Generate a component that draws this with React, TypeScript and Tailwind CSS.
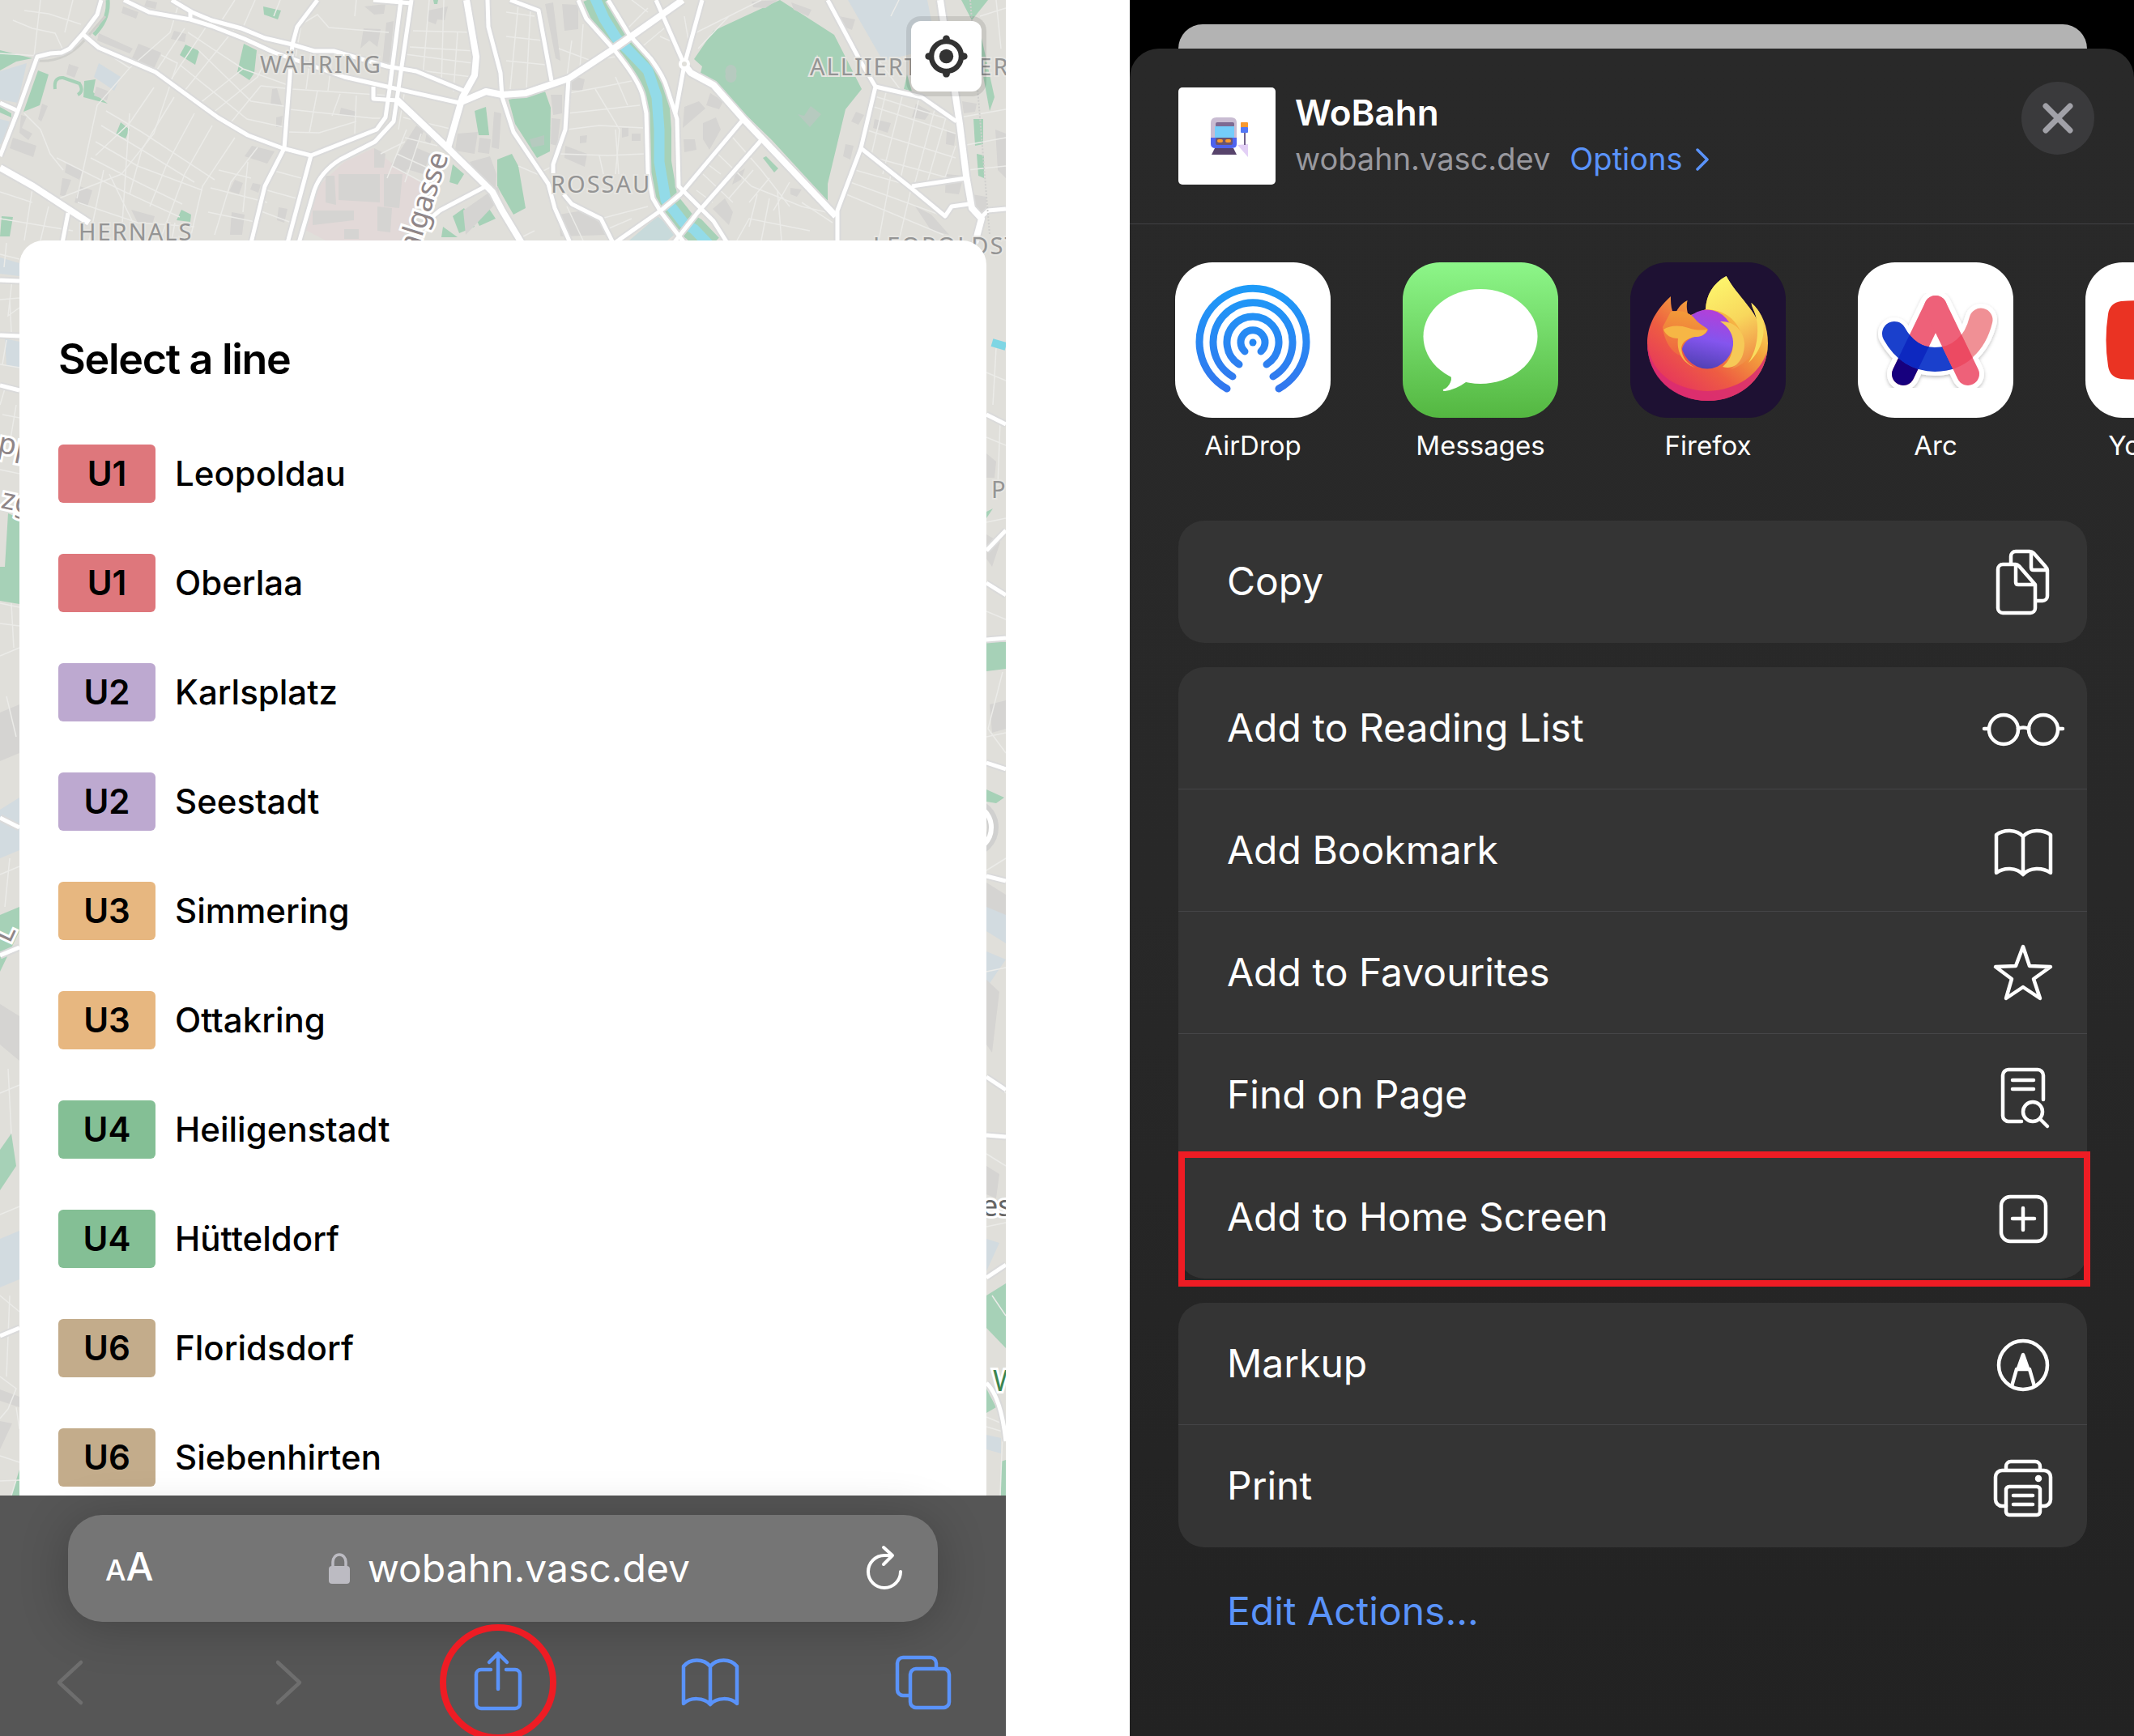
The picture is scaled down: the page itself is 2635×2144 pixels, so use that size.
import type { ReactNode } from 'react'

type Line = { code: string; badge: string; name: string }

const LINES: Line[] = [
  { code: 'U1', badge: 'bg-[#de777c]', name: 'Leopoldau' },
  { code: 'U1', badge: 'bg-[#de777c]', name: 'Oberlaa' },
  { code: 'U2', badge: 'bg-[#bda9d0]', name: 'Karlsplatz' },
  { code: 'U2', badge: 'bg-[#bda9d0]', name: 'Seestadt' },
  { code: 'U3', badge: 'bg-[#e7b780]', name: 'Simmering' },
  { code: 'U3', badge: 'bg-[#e7b780]', name: 'Ottakring' },
  { code: 'U4', badge: 'bg-[#84bf95]', name: 'Heiligenstadt' },
  { code: 'U4', badge: 'bg-[#84bf95]', name: 'Hütteldorf' },
  { code: 'U6', badge: 'bg-[#c3ac8b]', name: 'Floridsdorf' },
  { code: 'U6', badge: 'bg-[#c3ac8b]', name: 'Siebenhirten' },
]

const PARKS = [
  '963,0 1030,43 1064,110 1044,135 1022,227 1022,248 953,173 881,103 865,90 867,82 857,73 881,38',
  '628,123 673,113 680,133 679,187 663,195 636,153',
  '614,197 632,190 640,205 649,257 634,265 614,230',
  '0,62 40,72 20,76 0,87',
  '47,87 60,92 49,130 29,138',
  '229,55 246,63 241,80 222,68',
  '301,54 317,62 314,90 308,99 293,89',
  '149,151 160,160 155,171 143,166',
  '224,259 236,265 235,274 218,272',
  '2,267 16,268 12,292 0,292',
  '104,100 118,98 115,114 133,128 103,120',
  '586,137 600,132 604,167 591,167',
  '559,203 573,215 565,228 555,225',
  '559,267 573,257 586,280 567,288',
  '586,267 604,258 612,270 592,279',
  '547,280 565,293 545,293',
  '1212,47 1228,120 1222,137 1212,83',
  '1202,147 1214,147 1214,178 1204,180',
  '1206,190 1215,192 1215,220 1208,217',
  '1187,0 1220,0 1200,25',
  '1120,92 1126,113 1116,110',
  '942,195 946,193 961,208 956,213',
  '325,8 347,13 343,24 326,18',
  '535,0 541,0 540,5 536,5',
  '0,132 14,140 14,145 0,139',
  '10,634 24,640 24,746 0,742 0,700 6,700',
  '0,1130 24,1120 24,1150 0,1200',
  '14,1847 24,1815 24,1847',
  '0,1420 14,1400 20,1440 0,1470',
  '1218,793 1242,793 1242,826 1218,829',
  '1218,632 1226,628 1218,640',
  '1218,975 1240,985 1230,992 1218,990',
  '1218,1600 1242,1585 1242,1665 1218,1640',
  '1218,1715 1230,1738 1218,1745',
  '1236,1805 1242,1803 1242,1847 1236,1847',
]

const BUILDINGS = [
  '171,54 199,65 190,85 163,72',
  '215,38 230,42 228,52 211,48',
  '152,8 171,15 168,23 150,16',
  '181,0 194,3 192,11 178,8',
  '418,215 469,215 469,250 418,247',
  '402,217 413,217 415,253 402,250',
  '474,215 497,215 493,257 474,255',
  '386,260 437,260 437,272 386,278',
  '425,283 443,283 443,295 425,295',
  '462,183 476,190 474,207 462,207',
  '466,255 484,257 482,287 466,285',
  '514,155 524,160 500,215 483,203',
  '508,180 532,190 522,215 500,208',
  '528,158 537,160 531,178 525,174',
  '528,13 553,8 549,25 540,24 538,30 528,26',
  '450,8 476,5 474,17 462,18',
  '449,35 470,36 466,58 456,50 445,60',
  '477,28 486,26 481,82 472,78',
  '421,133 440,138 437,145 419,142',
  '336,110 342,109 348,130 334,129',
  '341,145 349,143 347,157 341,157',
  '290,222 300,226 295,240 283,236',
  '312,226 322,228 319,238 309,234',
  '311,180 339,187 330,202 302,193',
  '286,262 302,265 299,290 284,290',
  '344,256 355,258 351,275 342,272',
  '162,259 191,267 188,277 170,275',
  '82,202 102,210 98,222 80,213',
  '77,220 88,222 80,243 74,241',
  '98,230 114,235 108,255 92,250',
  '16,170 45,180 41,194 12,183',
  '52,128 59,131 51,150 47,147',
  '26,142 33,144 27,158 40,165 35,173 24,164',
  '85,79 97,83 92,96 82,92',
  '119,107 135,113 132,124 116,118',
  '122,41 164,60 160,66 120,50',
  '565,165 590,163 586,190 562,186',
  '592,170 606,172 604,190 590,188',
  '610,138 619,140 616,184 607,182',
  '580,200 605,193 613,215 612,234 595,225',
  '572,260 615,230 618,245 575,290',
  '673,5 683,3 692,75 686,72',
  '694,5 714,6 714,36 697,38',
  '706,93 722,98 719,112 706,111',
  '680,117 694,117 694,140 683,142',
  '681,146 692,147 688,180 680,178',
  '716,168 725,167 724,176 716,177',
  '698,180 725,190 722,206 697,195',
  '768,158 776,158 776,168 768,170',
  '780,165 791,165 791,174 780,174',
  '845,132 863,125 871,134 843,158',
  '868,152 884,145 890,160 876,185 868,172',
  '844,172 858,172 860,185 845,188',
  '877,115 893,125 888,135 872,130',
  '690,265 720,260 740,275 750,290 692,292',
  '895,245 905,262 900,278 880,258',
  '908,215 920,208 915,222 904,228',
  '976,232 990,234 984,243 976,240',
  '928,2 960,0 945,10 930,9',
  '977,3 1002,12 998,20 980,12',
  '1036,20 1056,24 1052,37 1042,33',
  '1057,138 1067,142 1060,154 1051,150',
  '1080,147 1100,152 1096,164 1078,158',
  '1131,128 1149,138 1142,148 1126,145',
  '1044,178 1054,180 1050,197 1041,193',
  '1169,160 1180,165 1178,180 1168,178',
  '1168,215 1190,217 1184,240 1167,238',
  '1188,125 1206,128 1204,138 1190,140',
  '1229,160 1242,165 1242,220 1232,210',
  '1130,255 1150,265 1172,290 1150,285',
  '1200,240 1218,243 1218,265 1204,262',
  '0,880 24,870 24,930 0,940',
  '0,1240 24,1255 24,1310 0,1290',
  '0,1716 24,1725 24,1738 0,1730',
  '0,1755 15,1758 0,1790',
  '1218,560 1230,570 1228,590 1218,590',
  '1218,660 1235,670 1225,700 1218,690',
  '1222,870 1242,865 1242,900 1225,905',
  '1218,1090 1242,1105 1242,1130 1218,1120',
  '1218,1210 1234,1225 1225,1300 1218,1290',
  '1218,1440 1234,1450 1230,1480 1218,1475',
]

const WATERY = [
  '1047,0 1145,0 1151,30 1151,60 1120,68 1090,75',
  '0,88 33,78 22,127 0,123',
  '0,147 12,150 5,180 0,178',
  '122,78 149,95 141,112 116,95',
  '0,318 24,325 24,341 0,338',
  '6,418 24,422 24,455 8,452',
  '0,1000 24,985 24,1050 0,1060',
  '0,1530 24,1520 24,1580 0,1590',
  '1218,1120 1242,1118 1242,1165 1218,1150',
  '1218,1175 1242,1185 1218,1220',
  '1218,1530 1234,1535 1218,1570',
  '1218,1772 1236,1776 1236,1795 1218,1790',
]

const MINOR_ROADS = [
  'M16 25L40 35L68 41L78 62M0 66L48 69M30 13L60 17L100 30M50 0L42 70M90 0L80 40',
  'M122 59L160 84L120 130L95 245M160 84L210 40L222 0M199 68L219 78L190 165L150 215L60 250',
  'M131 137L175 163L265 222M125 155L180 188L240 225M118 175L170 205L250 235M112 195L170 225L225 252M70 195L150 235L222 268',
  'M190 108L160 152L118 192M215 120L175 185L160 240M240 140L205 205L185 255M262 155L228 215L200 290M290 170L250 230L236 290M318 182L285 225L265 290',
  'M192 89L228 35M210 100L260 25M228 112L270 60L290 35M246 128L300 85M262 140L318 95L330 70M282 155L322 106',
  'M232 40L300 85L361 107M245 62L310 125L357 132M222 80L305 147L355 158M322 106L361 110L480 118M357 135L460 146L478 146',
  'M392 112L382 164M420 116L410 143M440 118L438 165M356 163L394 164L440 150M384 64L378 110M410 70L405 112M430 73L428 96',
  'M365 70L372 30L392 18L406 34L480 40M315 0L300 34M290 0L272 28M346 0L338 20M440 0L438 20M510 38L588 40M506 58L586 63',
  'M502 85L583 95M500 67L584 78M530 0L522 95M548 0L545 105M565 40L560 113M498 145L560 160M500 170L540 180M500 110L492 160',
  'M484 205L540 235M490 190L545 215M502 160L478 220M520 165L500 225M470 190L500 175M335 210L372 220M330 235L366 245M320 260L360 275',
  'M0 237L40 250M0 270L90 285M40 233L30 297M60 255L50 297M96 250L170 275L240 280M128 210L110 297M30 140L50 160L62 190L78 210',
  'M160 140L150 290M135 215L175 297M216 275L212 297M260 232L330 250M257 262L320 275M306 200L300 262M270 210L310 220',
  'M625 15L660 20M625 45L670 50M625 75L674 80M640 5L630 110M655 10L650 110M690 60L730 75L760 70M706 50L700 95M720 30L716 85',
  'M702 115L740 108L780 100M700 140L790 130M700 160L740 155L795 158M690 190L750 192L796 190M735 110L765 160M760 95L775 130M760 160L764 215M740 192L745 215',
  'M683 205L663 215L640 205M765 160L760 215M630 300L660 285M700 255L720 297M742 270L800 255M745 285L780 270',
  'M765 45L800 10M790 60L820 35M800 15L780 0M815 45L838 55L845 80M850 50L845 20M860 40L940 0M862 60L900 20',
  'M884 188L928 230L990 255L1020 262M868 215L905 250M905 170L940 210L975 255M860 235L880 250M870 200L890 215M925 280L935 240M940 297L950 245',
  'M990 250L1028 275M960 235L965 297M910 297L925 270L1000 285M930 210L900 245M950 220L925 250M975 225L955 260',
  'M1068 160L1180 195M1063 190L1190 225M1056 210L1126 230M1050 225L1160 265M1045 240L1165 290M1073 130L1180 165M1077 118L1180 150',
  'M1095 110L1075 195M1115 115L1090 215M1135 120L1112 220M1155 132L1128 232M1168 145L1145 225M1180 180L1165 225M1100 215L1085 297M1125 233L1110 297',
  'M1085 75L1115 115M1110 0L1100 20M1210 20L1242 10M1185 145L1242 135M1188 180L1242 170M1194 210L1242 205M1230 0L1236 60',
  'M0 314L24 320M8 300L5 330M15 345L10 390L24 380M0 370L24 368M12 368L14 410M0 450L24 454M8 420L3 450M6 480L0 500M20 500L10 560M3 512L24 516',
  'M0 580L24 585M0 770L24 773M14 745L17 800M0 745L24 750M0 810L24 800M8 860L20 910M0 1080L24 1070M12 1060L6 1120M0 1350L24 1340M10 1320L14 1400M0 1500L24 1490M0 1600L24 1620M12 1600L8 1700M0 1700L20 1715L10 1740L0 1752M20 1738L24 1765M0 1798L24 1806M0 1829L24 1828M20 1828L14 1847',
  'M1218 460L1242 470M1230 430L1226 500M1218 540L1242 550M1235 520L1232 600M1218 645L1242 640M1218 755L1242 765M1238 830L1220 900L1242 930M1218 910L1242 905M1218 1075L1242 1060M1218 1200L1242 1195M1218 1330L1242 1350M1218 1425L1242 1440M1218 1515L1242 1510M1225 1600L1242 1625M1218 1762L1238 1768L1235 1847M1218 1750L1242 1760',
]

const MAJOR_ROADS = [
  'M125 0L120 18L102 42L86 60L76 65L62 66L46 70L22 137L0 193',
  'M102 42L122 59L192 89L269 145L306 167L349 183L384 192L465 160L476 145L481 110L495 0',
  'M508 0L490 123L486 150L463 175L420 197Q396 212 388 235L369 300',
  'M153 0L184 15L235 24L261 32L302 48L339 65L425 95L478 107L567 127',
  'M212 0L237 15L261 25L298 35L327 47L361 55L388 63L412 63L478 82L514 88L575 113',
  'M235 15L235 24',
  'M392 0L367 33L361 55L351 183L327 230L310 300',
  'M384 192L355 300',
  'M84 263L77 300',
  'M602 0L603 33L618 90L620 120L634 163L677 227L685 257L704 300',
  'M600 230L543 260L496 300',
  'M0 127L20 136',
  'M461 0L508 4',
  'M461 107L461 122L490 124',
  'M630 0L665 13L681 100',
  'M702 97L698 160L683 203L683 214',
  'M714 0L724 23L757 60Q790 100 794 120L798 140L800 213L806 245L816 262L845 300',
  'M751 0L777 43L804 73Q820 95 824 110L836 147L838 230L881 273L898 300',
  'M810 0L845 80M867 0L845 80L834 140',
  'M918 147L840 240L816 260L759 300',
  'M940 173L861 263L832 300',
  'M1022 0L1061 73L1081 107L1063 183L1034 260L1034 300',
  'M1081 107L1138 120L1181 150',
  'M1063 183L1126 233L1167 267L1175 255L1196 252M1126 230L1193 220',
  'M696 240L706 252L742 270L757 300',
  'M1212 268L1220 260L1242 258',
  'M0 346L24 347M0 414L24 415M0 476L24 482',
  'M0 1010L24 1022M0 1180L24 1170M0 1650L24 1640',
  'M1218 512L1242 524M1218 680L1242 655M1218 720L1242 735M1218 790L1242 788M1218 942L1242 950',
  'M1218 1082L1242 1088M1218 1330L1242 1346M1218 1402L1242 1404M1218 1578L1242 1562M1218 1708Q1236 1725 1242 1780',
]

const MAIN_ROADS = [
  'M0 207L41 230L110 275',
  'M576 0L588 70L586 93L571 120L553 183',
  'M490 123L553 183L608 237L620 260L644 300',
  'M567 127L600 113L620 117L649 115L702 97L755 62L843 0',
  'M845 80L853 90L881 105L918 147L1032 267',
  'M1161 0L1165 27L1179 113L1185 153L1193 217L1200 257L1212 270L1204 300',
]

const RIVER = 'M734 -4L746 23L761 47L776 62L800 87L811 120L814 160L814 200L822 247L834 262L844 275L857 283L877 304'

function CityMap() {
  return (
    <svg
      className="absolute inset-0 h-full w-full"
      viewBox="0 0 1242 1847"
      preserveAspectRatio="xMinYMin slice"
      aria-hidden="true"
    >
      <rect width="1242" height="1847" fill="#e0dfda" />
      <polygon points="461,183 494,210 527,230 506,277 494,300 408,300 375,283 390,233 425,200" fill="#e2d9d8" />
      {WATERY.map(p => (
        <polygon key={p} points={p} fill="#d2dbe0" />
      ))}
      <polygon points="777,297 812,267 836,287 824,297" fill="#c8dadb" />
      {PARKS.map(p => (
        <polygon key={p} points={p} fill="#a6d1b7" />
      ))}
      {BUILDINGS.map(p => (
        <polygon key={p} points={p} fill="#d5d4d2" />
      ))}
      <g fill="#b6cabf">
        <path d="M896 91a7 8 0 1 1 13 0a7 8 0 1 1 -13 0" />
        <path d="M985 141l8 2l8 -12l13 10l-14 16z" />
        <path d="M654 172l18 -5v12l-15 3z" />
      </g>
      <path d="M133 0Q135 24 116 43" fill="none" stroke="#a6d1b7" strokeWidth="5" />
      <path d="M68 110q-2 -15 10 -14l20 7q6 10 -2 14" fill="none" stroke="#a6d1b7" strokeWidth="4" />
      <path d="M45 75Q80 78 104 50L130 20" fill="none" stroke="#cfcfcb" strokeWidth="3" />
      <g fill="none" stroke="#ebebe8" strokeWidth="1.5">
        {MINOR_ROADS.map(d => (
          <path key={d} d={d} />
        ))}
      </g>
      <g fill="none" strokeLinejoin="round">
        <path d={RIVER} stroke="#a6d1b7" strokeWidth="30" />
        <path d={RIVER} stroke="#93dbe8" strokeWidth="13" />
        <path d="M1225 423L1242 428" stroke="#7fd6e4" strokeWidth="10" />
        <g stroke="#dadada" strokeWidth="9">
          {MAJOR_ROADS.map(d => (
            <path key={d} d={d} />
          ))}
        </g>
        <g stroke="#dadada" strokeWidth="12">
          {MAIN_ROADS.map(d => (
            <path key={d} d={d} />
          ))}
        </g>
        <g stroke="#fff" strokeWidth="5">
          {MAJOR_ROADS.map(d => (
            <path key={d} d={d} />
          ))}
        </g>
        <g stroke="#fff" strokeWidth="8">
          {MAIN_ROADS.map(d => (
            <path key={d} d={d} />
          ))}
        </g>
        <circle cx="845" cy="79" r="5" fill="#e0dfda" stroke="#fff" strokeWidth="4" />
        <circle cx="1196" cy="1022" r="30" stroke="#d0d0cf" strokeWidth="14" />
        <circle cx="1194" cy="1022" r="30" stroke="#fff" strokeWidth="6" />
        <path d="M1198 0L1222 290" stroke="#cfcfcd" strokeWidth="2" strokeDasharray="2 2" />
      </g>
      <g
        className="font-['Noto_Sans',sans-serif]"
        fontSize="29"
        letterSpacing="2"
        fill="#949494"
        stroke="#e6e5e1"
        strokeWidth="4"
        paintOrder="stroke"
      >
        <text x="321" y="90">WÄHRING</text>
        <text x="97" y="297">HERNALS</text>
        <text x="680" y="238">ROSSAU</text>
        <text x="1000" y="93">ALLIIERTENVIERTEL</text>
        <text x="1078" y="314">LEOPOLDSTADT</text>
        <text x="1224" y="615">PRATER</text>
      </g>
      <g
        className="font-['Noto_Sans',sans-serif]"
        fontSize="36"
        fill="#8f8688"
        stroke="#fff"
        strokeWidth="6"
        paintOrder="stroke"
      >
        <text transform="translate(495 374) rotate(-72)">Spitalgasse</text>
        <text transform="translate(-4 558) rotate(12)">pp</text>
        <text transform="translate(0 627) rotate(12)">zg</text>
        <text transform="translate(12 1166) rotate(-65)">L</text>
        <text x="1212" y="1502" fill="#666">es</text>
        <text x="1226" y="1718" fill="#3c8550">W</text>
      </g>
    </svg>
  )
}

function NavIcon({ children }: { children: ReactNode }) {
  return (
    <svg
      className="h-20 w-20"
      viewBox="0 0 80 80"
      fill="none"
      stroke="currentColor"
      strokeWidth="4.5"
      strokeLinecap="round"
      strokeLinejoin="round"
      aria-hidden="true"
    >
      {children}
    </svg>
  )
}

function BrowserBar() {
  return (
    <footer className="relative bg-[#565656] pt-6 pb-[26px]">
      <div className="mr-[84px] ml-[84px] flex h-[132px] items-center justify-between rounded-[42px] bg-[#757575] pr-[42px] pl-[46px] text-white shadow-[0_6px_60px_rgba(0,0,0,0.22)]">
        <button type="button" aria-label="Page settings" className="flex items-baseline font-medium">
          <span className="text-[36px] leading-[64px]">A</span>
          <span className="text-[48px] leading-[64px]">A</span>
        </button>
        <button type="button" className="flex items-center gap-[22px] text-[48px] leading-[64px]">
          <svg className="h-[38px] w-[26px]" viewBox="0 0 26 38" aria-hidden="true">
            <rect y="16" width="26" height="22" rx="4" fill="#bcbbc2" />
            <path d="M5 18V11a8 9 0 0 1 16 0v7" fill="none" stroke="#bcbbc2" strokeWidth="3.5" />
          </svg>
          wobahn.vasc.dev
        </button>
        <button type="button" aria-label="Reload">
          <svg
            className="h-[58px] w-12"
            viewBox="0 0 48 58"
            fill="none"
            stroke="currentColor"
            strokeWidth="4"
            strokeLinecap="round"
            strokeLinejoin="round"
            aria-hidden="true"
          >
            <path d="M44 33a20 20 0 1 1-20-20h9M23 3l11 10-11 11" />
          </svg>
        </button>
      </div>
      <nav className="mt-[35px] flex items-center justify-between pr-[62px] pl-[46px] text-[#5a93fa]">
        <button type="button" aria-label="Back" className="text-[#6e6e6e]">
          <NavIcon>
            <path d="M54 15L27 40L54 65" />
          </NavIcon>
        </button>
        <button type="button" aria-label="Forward" className="text-[#6e6e6e]">
          <NavIcon>
            <path d="M33 15L60 40L33 65" />
          </NavIcon>
        </button>
        <button type="button" aria-label="Share" className="relative">
          <NavIcon>
            <path d="M33 24H21a6 6 0 0 0-6 6v36a6 6 0 0 0 6 6h42a6 6 0 0 0 6-6V30a6 6 0 0 0-6-6H52M42 48V5M31 15L42 4L53 15" />
          </NavIcon>
          <span className="absolute -top-8 -right-[34px] -bottom-8 -left-[30px] rounded-full border-8 border-[#ee1c24]" />
        </button>
        <button type="button" aria-label="Bookmarks">
          <NavIcon>
            <path d="M40 20C32 10 15 10 7 20V66C15 58 32 58 40 67V20C48 10 65 10 73 20V66C65 58 48 58 40 67" />
          </NavIcon>
        </button>
        <button type="button" aria-label="Tabs">
          <NavIcon>
            <path d="M22 56H15a7 7 0 0 1-7-7V16a7 7 0 0 1 7-7H49a7 7 0 0 1 7 7v7" />
            <rect x="24" y="23" width="48" height="48" rx="7" />
          </NavIcon>
        </button>
      </nav>
    </footer>
  )
}

function BrowserPhone() {
  return (
    <section className="flex min-w-0 flex-col overflow-hidden">
      <div className="relative flex flex-1 flex-col overflow-hidden px-6 pt-[297px]">
        <CityMap />
        <button
          type="button"
          aria-label="Find my location"
          className="absolute top-[26px] right-[30px] rounded-xl bg-white shadow-[0_0_0_6px_rgba(0,0,0,0.1)]"
        >
          <svg className="h-[87px] w-[87px]" viewBox="0 0 20 20" fill="#333" aria-hidden="true">
            <path d="M10 4C9 4 9 5 9 5v.1A5 5 0 0 0 5.1 9H5s-1 0-1 1 1 1 1 1h.1A5 5 0 0 0 9 14.9v.1s0 1 1 1 1-1 1-1v-.1a5 5 0 0 0 3.9-3.9h.1s1 0 1-1-1-1-1-1h-.1A5 5 0 0 0 11 5.1V5s0-1-1-1zm0 2.5a3.5 3.5 0 1 1 0 7 3.5 3.5 0 1 1 0-7z" />
            <circle cx="10" cy="10" r="2" />
          </svg>
        </button>
        <div className="relative flex-1 rounded-t-[30px] bg-white px-12 pt-[115px] pb-[11px] text-black">
          <h1 className="text-[52px] leading-[64px] font-semibold tracking-tight">Select a line</h1>
          <ul className="mt-[73px] flex flex-col gap-[63px]">
            {LINES.map(line => (
              <li key={line.name}>
                <a href="#" className="flex items-center gap-6 text-[42px] leading-[72px]">
                  <span className={`w-[120px] rounded-md text-center font-semibold ${line.badge}`}>{line.code}</span>
                  <span className="font-medium">{line.name}</span>
                </a>
              </li>
            ))}
          </ul>
        </div>
      </div>
      <BrowserBar />
    </section>
  )
}

function TrainIcon() {
  return (
    <svg className="mt-2 h-[120px] w-[120px] shrink-0 rounded-[5px] bg-white" viewBox="0 0 120 120" aria-hidden="true">
      <path d="M40 44q0-7 7-7h18q7 0 7 7v24H40z" fill="#c9bcd2" />
      <rect x="46" y="43" width="23" height="6" rx="2" fill="#7d6a92" />
      <rect x="45" y="48" width="24" height="14" fill="#74cdfa" />
      <path d="M40 62h32v8q0 5-6 5H46q-6 0-6-5z" fill="#4d63ee" />
      <rect x="46" y="62" width="21" height="9" rx="2" fill="#6b5570" />
      <rect x="48" y="64" width="7" height="4" rx="2" fill="#fb9a2c" />
      <rect x="58" y="64" width="7" height="4" rx="2" fill="#fb9a2c" />
      <path d="M45 75h23l4 8H41z" fill="#57436b" />
      <path d="M73 71l13-1v16z" fill="#e3d0f6" />
      <path d="M82 56v15" stroke="#73628a" strokeWidth="2" />
      <rect x="77" y="43" width="9" height="7" rx="1" fill="#f99a2f" />
      <rect x="77" y="49" width="9" height="7" rx="1" fill="#5478f6" />
    </svg>
  )
}

function AirDropLogo() {
  return (
    <svg viewBox="0 0 192 192" aria-hidden="true">
      <defs>
        <linearGradient id="airdrop" gradientUnits="userSpaceOnUse" x1="0" y1="28" x2="0" y2="160">
          <stop stopColor="#1d9bf8" />
          <stop offset="1" stopColor="#3376ee" />
        </linearGradient>
      </defs>
      <rect width="192" height="192" fill="#fff" />
      <g fill="none" stroke="url(#airdrop)" strokeWidth="9" strokeLinecap="round">
        <path d="M64 156A66 66 0 1 1 128 156" />
        <path d="M71 141A49 49 0 1 1 121 141" />
        <path d="M79 126A32 32 0 1 1 113 126" />
        <path d="M86 110A15 15 0 1 1 106 110" />
      </g>
      <circle cx="96" cy="99" r="4.5" fill="#2487f3" />
    </svg>
  )
}

function MessagesLogo() {
  return (
    <svg viewBox="0 0 192 192" aria-hidden="true">
      <defs>
        <linearGradient id="messages" x1="0" y1="0" x2="0" y2="1">
          <stop stopColor="#8df689" />
          <stop offset="1" stopColor="#54b741" />
        </linearGradient>
      </defs>
      <rect width="192" height="192" fill="url(#messages)" />
      <ellipse cx="96" cy="91.500" rx="70.500" ry="58.500" fill="#fff" />
      <path d="M56 137Q62 141 59 148Q56 155 50 157Q49 159 52 159Q66 157 78 148L90 140z" fill="#fff" />
    </svg>
  )
}

function FirefoxLogo() {
  return (
    <svg viewBox="0 0 192 192" aria-hidden="true">
      <defs>
        <linearGradient id="fx-body" x1=".85" y1=".1" x2=".2" y2=".95">
          <stop stopColor="#fff36e" />
          <stop offset=".35" stopColor="#f3a33b" />
          <stop offset=".65" stopColor="#ee5d42" />
          <stop offset="1" stopColor="#e5315f" />
        </linearGradient>
        <linearGradient id="fx-flame" x1=".3" y1="0" x2=".6" y2="1">
          <stop stopColor="#fdf66d" />
          <stop offset=".5" stopColor="#f8d75c" />
          <stop offset="1" stopColor="#f08a45" />
        </linearGradient>
        <linearGradient id="fx-head" x1=".5" y1="0" x2=".3" y2="1">
          <stop stopColor="#f29c38" />
          <stop offset="1" stopColor="#ee6541" />
        </linearGradient>
        <linearGradient id="fx-globe" x1=".6" y1="0" x2=".4" y2="1">
          <stop stopColor="#b33fd8" />
          <stop offset=".5" stopColor="#8455ee" />
          <stop offset="1" stopColor="#5140b4" />
        </linearGradient>
      </defs>
      <rect width="192" height="192" fill="#1e1133" />
      <path
        d="M50 42C28 62 21 82 21 100C21 140 54 171 96 171C138 171 170 140 170 100C170 80 163 62 149.500 50C150 57 155 62 156 70C150 56 132 42 118.600 17C102 26 94 40 93 58L72 66C70 60 69 54 70.600 47C64 50 59 56 57 61L52 60C50 54 50 48 50 42Z"
        fill="url(#fx-body)"
      />
      <path d="M21 100C26 142 62 158 96 159C132 158 160 138 169 110C164 148 132 171 96 171C54 171 21 142 21 100Z" fill="#d92c72" opacity=".85" />
      <path
        d="M118.600 17C102 26 94 40 93 58C116 58 134 72 138 92C142 112 136 124 124 132C146 126 160 104 160 86C158 60 132 42 118.600 17Z"
        fill="url(#fx-flame)"
      />
      <path d="M149.500 50C152 60 156 64 157 78C158 96 154 112 146 124C166 106 174 70 149.500 50Z" fill="#f9dd5f" />
      <ellipse cx="95" cy="95" rx="33" ry="36.500" fill="url(#fx-globe)" />
      <path
        d="M111 73C122 80 128 90 127 102C126 114 122 122 114 129C132 134 141 118 141 100C140 84 128 72 111 73Z"
        fill="#f6c957"
      />
      <path
        d="M50 61C62 58 74 62 80 70C86 77 92 79 96 83C92 93 82 90 76 93C66 98 62 106 64 116C50 112 42 96 40 80Z"
        fill="url(#fx-head)"
      />
      <path
        d="M41 83C48 78 60 77 72 81C80 84 88 84 95 83C92 91 86 92 80 92C70 94 64 98 63 106C64 118 70 125 80 130C64 124 57 110 59 94C50 94 44 90 41 83Z"
        fill="#f6b645"
      />
    </svg>
  )
}

const ARC_BOWL = 'M45 88C57 110 75 120 95 120C125 120 145 100 152 71'

function ArcLogo() {
  return (
    <svg viewBox="0 0 192 192" aria-hidden="true">
      <defs>
        <mask id="arc-bowl" maskUnits="userSpaceOnUse" x="0" y="0" width="192" height="192">
          <path d={ARC_BOWL} fill="none" stroke="#fff" strokeWidth="30" strokeLinecap="round" />
        </mask>
        <clipPath id="arc-left">
          <path d="M0 0H96L124 132V192H0z" />
        </clipPath>
        <clipPath id="arc-foot">
          <path d="M0 112H96V192H0z" />
        </clipPath>
        <filter id="arc-shadow" x="-20%" y="-20%" width="140%" height="140%">
          <feDropShadow dx="0" dy="2" stdDeviation="2" floodOpacity=".25" />
        </filter>
      </defs>
      <rect width="192" height="192" fill="#fff" />
      <g fill="none" strokeLinecap="round" strokeLinejoin="round">
        <g stroke="#fff" strokeWidth="40" filter="url(#arc-shadow)">
          <path d="M56 138L96 55L136 138" />
          <path d={ARC_BOWL} />
        </g>
        <path d={ARC_BOWL} stroke="#f09095" strokeWidth="29" />
        <path d="M56 138L96 55" stroke="#ee6179" strokeWidth="28" />
        <path d="M56 138L96 55" stroke="#17007e" strokeWidth="28" clipPath="url(#arc-foot)" />
        <path d={ARC_BOWL} stroke="#1a40cc" strokeWidth="30" clipPath="url(#arc-left)" />
        <g mask="url(#arc-bowl)">
          <path d="M56 138L96 55" stroke="#0d28c0" strokeWidth="28" />
        </g>
        <path d="M96 55L136 138" stroke="#ee6179" strokeWidth="28" />
        <g mask="url(#arc-bowl)">
          <path d="M106 76L136 138" stroke="#ec4a62" strokeWidth="28" strokeLinecap="butt" />
        </g>
      </g>
    </svg>
  )
}

function YouTubeLogo() {
  return (
    <svg viewBox="0 0 192 192" aria-hidden="true">
      <rect width="192" height="192" fill="#fff" />
      <path d="M28 64q2-14 16-16q52-3 104 0q14 2 16 16q3 32 0 64q-2 14-16 16q-52 3-104 0q-14-2-16-16q-5-32 0-64z" fill="#ea3323" />
      <path d="M82 75v42l36-21z" fill="#fff" />
    </svg>
  )
}

const APPS: { name: string; logo: ReactNode }[] = [
  { name: 'AirDrop', logo: <AirDropLogo /> },
  { name: 'Messages', logo: <MessagesLogo /> },
  { name: 'Firefox', logo: <FirefoxLogo /> },
  { name: 'Arc', logo: <ArcLogo /> },
  { name: 'YouTube', logo: <YouTubeLogo /> },
]

type Action = { label: string; icon: ReactNode; highlighted?: boolean }

const ACTION_GROUPS: Action[][] = [
  [
    {
      label: 'Copy',
      icon: (
        <>
          <path d="M43 31H27a6 6 0 0 0-6 6v48a6 6 0 0 0 6 6h34a6 6 0 0 0 6-6V56L47 33q-2-2-4-2V53q0 3 3 3h20" />
          <path d="M37 29V21a6 6 0 0 1 6-6H60q3 0 5 2L80 34q2 2 2 4V70a6 6 0 0 1-6 6H69M62 16V35q0 3 3 3H81" />
        </>
      ),
    },
  ],
  [
    {
      label: 'Add to Reading List',
      icon: (
        <>
          <circle cx="28" cy="54" r="18" />
          <circle cx="77" cy="54" r="18" />
          <path d="M46 53Q52 50 59 53M4 53H9M96 53H101" />
        </>
      ),
    },
    {
      label: 'Add Bookmark',
      icon: <path d="M52 35C44 26 28 26 19 33V80C28 73 44 73 52 82V35C60 26 76 26 86 33V80C76 73 60 73 52 82" />,
    },
    {
      label: 'Add to Favourites',
      icon: <path d="M52 20L60 44L86 45L65 60L73 84L52 70L31 84L38 60L18 45L43 44Z" />,
    },
    {
      label: 'Find on Page',
      icon: (
        <>
          <path d="M77 58V28a7 7 0 0 0-7-7H34a7 7 0 0 0-7 7V78a7 7 0 0 0 7 7H50M39 34H65M39 45H65" />
          <circle cx="64" cy="73" r="12" />
          <path d="M74 83L82 91" />
        </>
      ),
    },
    {
      label: 'Add to Home Screen',
      highlighted: true,
      icon: (
        <>
          <rect x="25" y="27" width="55" height="55" rx="11" />
          <path d="M52 41V68M39 54H66" />
        </>
      ),
    },
  ],
  [
    {
      label: 'Markup',
      icon: (
        <>
          <circle cx="52" cy="54" r="30" />
          <path d="M52 41L46 58H58Z" fill="currentColor" />
          <path d="M44 59L38 80M60 59L66 80M44 59H60" />
        </>
      ),
    },
    {
      label: 'Print',
      icon: (
        <>
          <path d="M31 77H26a8 8 0 0 1-8-8V41a8 8 0 0 1 8-8H78a8 8 0 0 1 8 8V69a8 8 0 0 1-8 8H73" />
          <path d="M31 32V28a6 6 0 0 1 6-6H67a6 6 0 0 1 6 6V32M40 64H64M40 75H64" />
          <rect x="31" y="53" width="42" height="35" rx="4" />
          <circle cx="71" cy="43" r="2" fill="currentColor" />
        </>
      ),
    },
  ],
]

function ActionRow({ action }: { action: Action }) {
  return (
    <li className="relative border-[#454547] not-last:border-b last:pb-px">
      <button type="button" className="flex h-[150px] w-full items-center justify-between pr-[27px] pl-[60px]">
        {action.label}
        <svg
          className="h-[104px] w-[104px]"
          viewBox="0 0 104 104"
          fill="none"
          stroke="currentColor"
          strokeWidth="4.5"
          strokeLinecap="round"
          strokeLinejoin="round"
          aria-hidden="true"
        >
          {action.icon}
        </svg>
      </button>
      {action.highlighted && (
        <span className="absolute -top-1.5 -right-1 -bottom-2.5 left-0 border-8 border-[#ee1c24]" />
      )}
    </li>
  )
}

function SharePhone() {
  return (
    <section className="flex min-w-0 flex-col overflow-hidden bg-black pt-[30px] text-white">
      {/* page card stacked behind the sheet */}
      <div className="mr-[58px] ml-[60px] h-[30px] rounded-t-[30px] bg-[#b3b3b3]" />
      <div className="flex-1 rounded-t-[36px] bg-linear-to-b from-[#292929] via-[#282828] to-[#222222] pb-[122px]">
        <header className="flex items-start border-b border-[#414143] pt-10 pr-[49px] pb-12 pl-[60px]">
          <TrainIcon />
          <div className="mt-2 ml-6 flex h-[120px] min-w-0 flex-1 flex-col justify-center">
            <h2 className="text-[44px] leading-[57px] font-semibold">WoBahn</h2>
            <p className="flex items-center text-[38px] leading-[57px] text-[#98989e]">
              wobahn.vasc.dev
              <a href="#" className="ml-6 flex items-center gap-4 text-[#5a93fa]">
                Options
                <svg className="h-7 w-4" viewBox="0 0 16 28" fill="none" stroke="currentColor" strokeWidth="3.5" strokeLinecap="round" strokeLinejoin="round" aria-hidden="true">
                  <path d="M2 2L14 14L2 26" />
                </svg>
              </a>
            </p>
          </div>
          <button type="button" aria-label="Close" className="mt-px rounded-full bg-[#3a3a3c] text-[#a1a1a8]">
            <svg className="h-[90px] w-[90px]" viewBox="0 0 90 90" stroke="currentColor" strokeWidth="7" strokeLinecap="round" aria-hidden="true">
              <path d="M30 30L60 60M60 30L30 60" />
            </svg>
          </button>
        </header>
        <ul className="flex gap-[89px] overflow-hidden pt-[47px] pl-14">
          {APPS.map(app => (
            <li key={app.name} className="w-48 shrink-0">
              <button type="button" className="w-48 text-[33px] leading-10">
                <span className="block h-48 w-48 overflow-hidden rounded-[46px]">{app.logo}</span>
                <span className="mt-3.5 block">{app.name}</span>
              </button>
            </li>
          ))}
        </ul>
        <div className="mt-[73px] mr-[58px] ml-[60px] flex flex-col gap-[30px] text-[48px] leading-[64px]">
          {ACTION_GROUPS.map(group => (
            <ul key={group[0].label} className="rounded-[32px] bg-[#343434]">
              {group.map(action => (
                <ActionRow key={action.label} action={action} />
              ))}
            </ul>
          ))}
          <a href="#" className="mt-[17px] ml-[60px] text-[#5a93fa]">
            Edit Actions...
          </a>
        </div>
      </div>
    </section>
  )
}

export default function App() {
  return (
    <main className="grid min-h-screen grid-cols-[1242fr_1240fr] gap-[153px] bg-white font-['Inter','Liberation_Sans',sans-serif]">
      <BrowserPhone />
      <SharePhone />
    </main>
  )
}
